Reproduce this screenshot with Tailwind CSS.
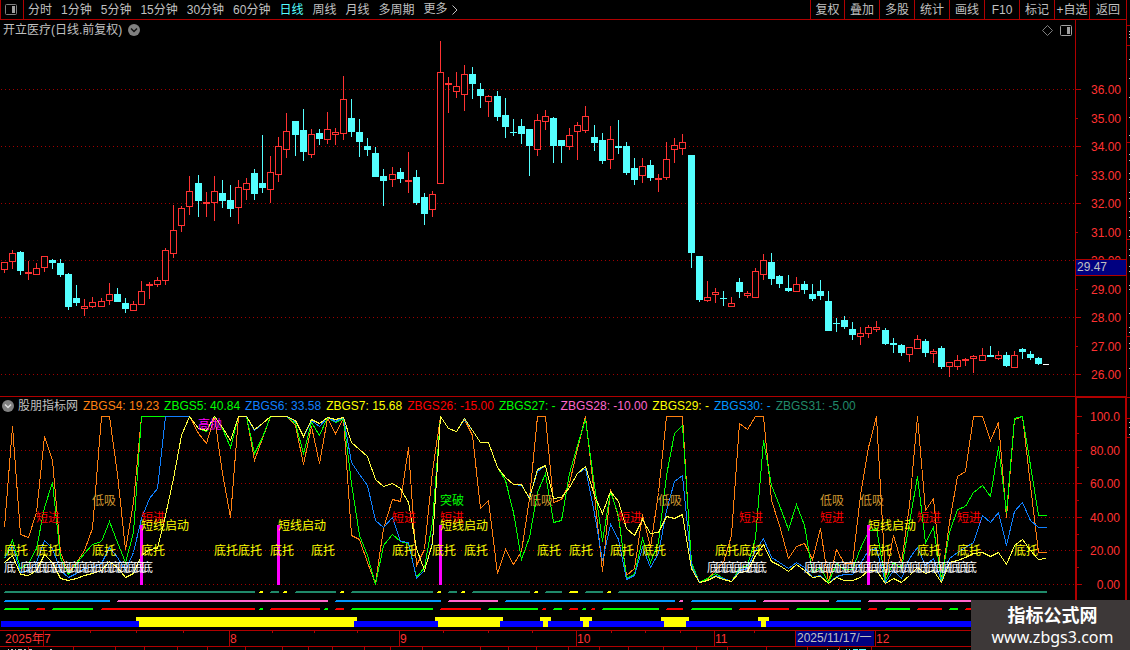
<!DOCTYPE html>
<html lang="zh-CN">
<head>
  <meta charset="UTF-8">
  <meta name="viewport" content="width=device-width, initial-scale=1.0">
  <title>开立医疗 日线</title>
  <script src="https://cdn.jsdelivr.net/npm/@tailwindcss/browser@4"></script>
</head>
<body class="flex h-screen overflow-hidden bg-black text-[#c0c0c0] text-xs font-['Liberation_Sans','Noto_Sans_CJK_SC',sans-serif]">

  <div class="flex min-w-0 flex-1 flex-col border-r border-[#b00000]">
    <!-- Toolbar -->
    <header class="flex h-5 shrink-0 justify-between border-b border-l border-[#b00000] leading-[21px] whitespace-nowrap">
      <nav class="flex" aria-label="周期">
        <button class="flex w-[23px] items-center border-r border-[#b00000] pl-1" aria-label="侧栏">
          <svg width="12" height="11" viewBox="0 0 12 11" fill="none">
            <rect x="0.5" y="0.5" width="11" height="10" rx="1" stroke="#808080"/>
            <rect x="7" y="2" width="3" height="7" fill="#a0a0a0"/>
          </svg>
        </button>
        <div class="flex h-[19px] gap-[9px] pl-1">
          <button>分时</button>
          <button>1分钟</button>
          <button>5分钟</button>
          <button>15分钟</button>
          <button>30分钟</button>
          <button>60分钟</button>
          <button class="text-[#54ffff]">日线</button>
          <button>周线</button>
          <button>月线</button>
          <button>多周期</button>
          <button class="flex items-center gap-1">更多
            <svg width="6" height="10" viewBox="0 0 6 10" fill="none" stroke="#c0c0c0"><path d="M0.5 0.5 L5 5 L0.5 9.5"/></svg>
          </button>
        </div>
      </nav>
      <div class="flex h-[19px]">
        <button class="w-[34px] border-l border-[#b00000]">复权</button>
        <button class="w-[35px] border-l border-[#b00000]">叠加</button>
        <button class="w-[35px] border-l border-[#b00000]">多股</button>
        <button class="w-[35px] border-l border-[#b00000]">统计</button>
        <button class="w-[35px] border-l border-[#b00000]">画线</button>
        <button class="w-[35px] border-l border-[#b00000]">F10</button>
        <button class="w-[35px] border-l border-[#b00000]">标记</button>
        <button class="w-[35px] border-l border-[#b00000]">+自选</button>
        <button class="w-[37px] border-l border-[#b00000]">返回</button>
      </div>
    </header>

    <main class="grid min-h-0 flex-1 grid-cols-[1fr_51px] grid-rows-[377fr_233fr]">
      <!-- Candles -->
      <section class="relative min-h-0 border-b border-[#b00000]">
        <svg id="price" class="absolute inset-0 size-full" viewBox="0 20 1075 376" preserveAspectRatio="none" shape-rendering="crispEdges"></svg>
        <div class="relative flex h-5 items-center justify-between pr-[3px] pl-[3px]">
          <div class="flex items-center gap-[6px]">
            <h1>开立医疗(日线.前复权)</h1>
            <button aria-label="展开">
              <svg class="block" width="12" height="12" viewBox="0 0 12 12"><circle cx="6" cy="6" r="6" fill="#808080"/><path d="M3 4.5 L6 7.5 L9 4.5" fill="none" stroke="#111" stroke-width="1.5"/></svg>
            </button>
          </div>
          <div class="flex items-center gap-[7px]">
            <svg width="11" height="11" viewBox="0 0 11 11" fill="none" stroke="#808080"><path d="M5.5 0.5 L10.5 5.5 L5.5 10.5 L0.5 5.5 Z"/></svg>
            <svg width="12" height="11" viewBox="0 0 12 11" fill="none"><rect x="0.5" y="0.5" width="11" height="10" rx="1" stroke="#a0a0a0"/><rect x="7" y="2" width="3" height="7" fill="#a0a0a0"/></svg>
          </div>
        </div>
      </section>
      <div id="priceAxis" class="relative min-h-0 border-b border-l border-[#b00000] text-[#ff3232]"></div>

      <!-- Indicator -->
      <section class="relative min-h-0">
        <svg id="indicator" class="absolute inset-0 size-full" viewBox="0 397 1075 233" preserveAspectRatio="none" shape-rendering="crispEdges"></svg>
        <div id="signals" class="absolute inset-0 overflow-hidden whitespace-nowrap"></div>
        <div class="relative flex h-[17px] items-center gap-[5px] overflow-hidden pl-[2px] whitespace-nowrap">
          <div class="flex items-center gap-1">
            <button aria-label="指标菜单">
              <svg class="block" width="12" height="12" viewBox="0 0 12 12"><circle cx="6" cy="6" r="6" fill="#808080"/><path d="M3 4.5 L6 7.5 L9 4.5" fill="none" stroke="#ddd" stroke-width="1.5"/></svg>
            </button>
            <h2>股朋指标网</h2>
          </div>
          <span class="text-[#ff8010]">ZBGS4: 19.23</span>
          <span class="text-[#00ff00]">ZBGS5: 40.84</span>
          <span class="text-[#1080ff]">ZBGS6: 33.58</span>
          <span class="text-[#ffff00]">ZBGS7: 15.68</span>
          <span class="text-[#ff0000]">ZBGS26: -15.00</span>
          <span class="text-[#00ff00]">ZBGS27: -</span>
          <span class="text-[#ff66cc]">ZBGS28: -10.00</span>
          <span class="text-[#ffff00]">ZBGS29: -</span>
          <span class="text-[#0096ff]">ZBGS30: -</span>
          <span class="text-[#208a6a]">ZBGS31: -5.00</span>
        </div>
      </section>
      <div id="indicatorAxis" class="relative min-h-0 border-t border-r border-l-2 border-[#b00000] text-[#ff3232]"></div>
    </main>

    <!-- Dates -->
    <footer class="relative h-5 shrink-0">
      <svg class="absolute inset-0 size-full" viewBox="0 630 1126 20" preserveAspectRatio="none" shape-rendering="crispEdges" id="dateTicks"></svg>
      <div id="dates" class="absolute inset-0 overflow-hidden leading-4 whitespace-nowrap text-[#ff3232]"></div>
    </footer>
  </div>

  <!-- Edge of the quote panel -->
  <svg id="edge" class="h-full w-[3px] shrink-0" viewBox="0 0 3 650" preserveAspectRatio="none" shape-rendering="crispEdges"></svg>

  <div class="fixed right-0 bottom-0 flex h-[50px] w-[159px] flex-col items-center justify-center bg-[#3d3838] pt-px pl-1 text-white">
    <strong class="text-lg leading-[22px] font-bold">指标公式网</strong>
    <a href="#" class="font-['Noto_Sans',sans-serif] text-base leading-5">www.zbgs3.com</a>
  </div>

  <script>
    const RED = '#ff3232', CYAN = '#54ffff', LINE = '#b00000'
    const barX = i => Math.floor(4.045 + i * 8.0825)
    const rect = (x, y, w, h, fill) => `<rect x="${x}" y="${y}" width="${w}" height="${h}" fill="${fill}"/>`
    const gridLine = y => `<path d="M1 ${y + 0.5} H1075" stroke="#a00000" stroke-dasharray="1 3"/>`

    // one bar per entry: colour high top bottom low
    const candles = `r262 262 270 273,r250 253 262 269,c251 252 271 275,r261 272 274 280,r263 268 275 275,r256 256 268 272,c259 260 263 269,c259 263 275 277,c273 274 307 310,c285 298 303 306,r299 306 309 316,r297 302 307 308,
r298 301 307 307,r283 294 301 305,c288 294 302 302,c298 303 309 313,r301 304 311 311,r281 291 305 305,r282 284 286 299,r277 280 285 287,r248 250 281 285,r205 230 254 258,r206 208 226 232,r176 191 207 215,
c175 183 201 217,r192 202 204 217,r176 191 203 221,c180 193 201 208,c185 200 209 217,r180 187 208 224,r178 183 190 200,c169 173 194 200,c135 183 188 193,r156 172 190 203,r137 146 175 182,r113 131 150 158,
c121 121 135 156,c109 130 152 161,r129 134 155 158,c129 133 139 145,r112 129 140 144,r128 132 135 145,r76 99 134 140,c99 118 132 137,c119 132 142 157,c138 146 150 156,c147 153 177 177,c169 176 181 206,
r167 174 180 187,c168 172 179 183,r152 180 182 193,c170 177 203 205,c193 197 214 225,r191 194 210 217,r41 72 184 184,r77 83 85 113,r72 86 92 98,r65 74 95 111,c67 74 84 99,c83 89 96 108,
r95 96 102 117,c91 96 117 121,c98 115 127 138,c119 132 133 136,c119 126 134 144,c129 129 146 176,r114 120 150 156,r110 116 122 130,c117 118 146 163,c140 140 146 163,r128 135 147 150,r122 125 132 160,
r106 116 131 133,c125 137 143 151,c133 140 161 164,r126 139 160 169,c120 146 148 154,c142 146 173 175,c158 168 180 185,r158 166 176 183,c160 165 178 181,r174 178 180 192,r142 159 178 180,r138 145 150 163,
r134 142 149 155,c155 155 253 268,c256 256 300 302,r281 297 301 302,r288 292 295 303,c291 298 299 306,r297 303 307 307,c278 282 292 298,r291 293 296 298,r268 271 298 298,r254 260 275 280,c253 262 279 285,
c275 276 284 288,c275 288 291 292,r277 284 292 292,c281 284 290 294,c284 294 299 301,c280 291 296 300,c291 301 331 331,c318 323 324 332,c316 320 327 329,c322 329 335 340,r327 333 337 345,r325 327 334 338,
r321 327 330 332,c328 330 344 345,c338 343 345 353,c344 345 353 356,r347 347 355 362,r335 339 349 349,c339 341 353 357,r349 351 354 363,c346 348 367 369,r362 362 367 377,r355 360 367 370,r358 359 361 366,
r355 356 359 373,r348 355 361 361,c346 355 357 357,r351 355 359 360,c352 355 366 367,r351 355 368 368,c348 349 352 359,c351 354 358 360,c357 358 364 365`.split(',').map(s => s.trim())

    let price = [89, 146, 203, 260, 317, 374].map(gridLine).join('')
    candles.forEach((c, i) => {
      const [high, top, bottom, low] = c.slice(1).split(' ').map(Number)
      const x = barX(i)
      if (c[0] === 'c') {
        price += rect(x, high, 1, low - high, CYAN) + rect(x - 3, top, 7, bottom - top, CYAN)
      } else {
        price += rect(x, high, 1, top - high, RED) + rect(x, bottom, 1, low - bottom, RED)
        price += rect(x - 3, top, 7, bottom - top, RED)
        if (bottom - top > 2) price += rect(x - 2, top + 1, 5, bottom - top - 2, '#000')
      }
    })
    price += rect(1043, 364, 6, 1, '#fff')
    document.getElementById('price').innerHTML = price

    const lines = [
      ['#ff8010', '527 426 534 537 512 436 460 552 572 562 550 528 416 416 474 549 502 416 416 416 416 416 416 416 433 443 416 473 517 416 416 460 438 416 416 416 425 464 426 463 418 433 418 535 539 562 583 528 499 501 447 565 549 471 416 428 431 419 435 508 500 573 549 564 551 498 416 416 502 499 483 448 416 495 571 489 517 575 568 514 547 492 416 416 416 567 582 579 570 562 535 423 429 416 416 500 525 558 546 543 559 528 582 549 563 563 495 447 416 577 535 562 505 416 510 498 580 522 476 471 416 416 440 422 517 419 416 485 552 552'],
      ['#00ff00', '558 540 568 563 548 507 482 557 574 563 553 544 541 521 542 562 532 416 416 416 416 416 416 416 428 431 416 428 447 416 416 453 437 416 416 416 423 453 422 435 417 422 418 483 535 555 584 545 534 541 543 577 567 522 416 428 431 419 430 442 442 467 480 512 559 537 492 473 522 520 473 445 419 485 541 491 515 578 574 538 562 542 475 433 425 562 582 578 573 578 581 568 565 538 440 485 505 529 504 525 572 567 582 563 569 569 548 531 528 580 562 568 522 476 542 527 580 532 509 506 492 485 496 446 512 418 416 465 515 515'],
      ['#1080ff', '558 545 572 570 562 540 548 570 577 573 568 567 563 547 557 570 552 518 498 488 416 416 416 416 428 430 416 427 440 416 416 430 423 416 416 416 421 436 420 426 417 421 417 462 474 485 520 527 517 541 542 578 570 542 416 428 431 419 430 442 442 467 477 484 485 497 471 465 498 497 487 473 468 513 560 524 539 579 575 547 567 553 510 481 475 565 582 580 575 578 581 570 568 550 538 557 562 568 562 567 577 575 583 576 574 574 563 550 548 582 570 578 558 547 565 558 581 558 552 547 542 515 522 512 545 511 502 520 527 527'],
      ['#ffff40', '562 555 574 575 570 554 562 578 580 578 575 573 570 561 567 577 573 555 549 548 515 478 435 416 428 430 416 427 440 416 416 429 423 416 416 416 420 436 419 423 417 419 417 442 449 456 479 486 483 488 502 548 570 543 416 428 431 418 430 442 442 467 477 484 484 498 469 465 498 497 487 473 466 495 513 491 501 528 535 519 533 532 516 518 514 568 582 580 576 579 581 572 571 555 544 561 565 571 564 570 577 576 583 577 580 580 577 570 570 583 578 582 575 567 573 570 582 562 560 557 553 552 556 552 564 545 539 550 559 558']
    ]

    let ind = [450, 483, 517, 550, 584].map(gridLine).join('')
    lines.forEach(([color, ys]) => {
      const points = ys.split(' ').map((y, i) => `${barX(i) + 0.5},${+y + 0.5}`).join(' ')
      ind += `<polyline points="${points}" fill="none" stroke="${color}"/>`
    })
    ;[140, 277, 439, 867].forEach(x => { ind += rect(x, 525, 3, 60, '#f0f') })

    // state rows: start end colour
    const rows = [
      [591, 't4 255,y259 263,t270 279,y283 287,t295 336,y340 344,t351 433,y437 441,t448 457,y461 465,t472 530,y534 538,t545 562,y569 578,t585 603,y607 611,t618 1047'],
      [600, 'b4 110,p117 328,b335 441,p448 498,b505 675,p679 683,b691 756,p763 829,b836 861,p868 1047'],
      [608, 'g4 29,r36 45,g52 93,r101 255,g259 263,r270 320,g324 328,r335 344,g351 433,r440 481,g488 538,r542 546,g553 562,r569 578,g582 586,r591 595,g602 659,r666 683,g691 732,r739 789,g796 861,r868 877,g885 910,r917 942,g949 958,r965 1047']
    ]
    const rowColors = { t: '#208a6a', y: '#ffff00', b: '#0096ff', p: '#ff66cc', g: '#00ff00', r: '#ff0000' }
    rows.forEach(([y, segs]) => segs.split(',').forEach(s => {
      const [a, b] = s.slice(1).split(' ').map(Number)
      ind += rect(a + 1, y, b - a - 1, 1, rowColors[s[0]]) + rect(a, y + 1, b - a, 1, rowColors[s[0]])
    }))
    ind += rect(1, 621, 1046, 6, '#00f')
    ;[[139, 354], [438, 500], [543, 548], [583, 589], [664, 686], [761, 766]].forEach(([a, b]) => {
      ind += rect(a - 3, 617, b - a + 6, 4, '#ff0') + rect(a, 621, b - a, 6, '#ff0')
    })
    document.getElementById('indicator').innerHTML = ind

    const range = (a, b) => Array.from({ length: b - a + 1 }, (_, k) => a + k)
    const signals = [
      ['高抛', 424, 'text-[#ff00ff]', [24]],
      ['低吸', 500, 'text-[#d09830]', [11, 65, 81, 101, 106]],
      ['突破', 500, 'text-[#00ff00]', [54]],
      ['短进', 517, 'text-[#ff0000]', [4, 17, 48, 54, 76, 91, 101, 113, 118]],
      ['短线启动', 525, 'text-[#ffff00]', [17, 34, 54, 107]],
      ['底托', 550, 'text-[#ffff00]', [0, 4, 11, 17, 26, 29, 33, 38, 48, 53, 57, 66, 70, 75, 79, 88, 91, 107, 113, 118, 125]],
      ['底', 567, 'text-white', [0, ...range(2, 17), ...range(87, 93), ...range(99, 119)]]
    ]
    document.getElementById('signals').innerHTML = signals.map(([text, y, cls, at]) => at.map(i =>
      `<span class="absolute -mt-[7px] h-4 leading-4 ${cls}" style="left:${barX(i) / 10.75}%;top:${(y - 397) / 2.33}%">${text}</span>`
    ).join('')).join('')

    // axis labels, each with its tick on the line
    function axis(id, base, height, labels, minor) {
      const at = y => `style="top:${(y - base) / height * 100}%"`
      document.getElementById(id).innerHTML = labels.map(([text, y, short]) =>
        `<div class="absolute inset-x-0 -mt-[7px] flex h-[15px] items-center justify-between pr-[5px] leading-[15px]" ${at(y)}><span class="h-px bg-[#b00000] ${short ? 'w-[2px]' : 'w-[5px]'}"></span><span class="pt-[2px]">${text}</span></div>`
      ).join('') + minor.map(y => `<div class="absolute left-0 h-px w-[2px] bg-[#b00000]" ${at(y)}></div>`).join('')
    }
    axis('priceAxis', 20, 376, [
      ['36.00', 89], ['35.00', 118, 1], ['34.00', 146], ['33.00', 175, 1], ['32.00', 203], ['31.00', 232, 1],
      ['30.00', 260], ['29.00', 289, 1], ['28.00', 317], ['27.00', 346, 1], ['26.00', 374]
    ], [])
    document.getElementById('priceAxis').innerHTML +=
      `<div class="absolute inset-x-0 h-[17px] border-y border-[#b00000] bg-[#000080] pl-px leading-[15px] text-[#c0c0c0]" style="top:${(259 - 20) / 3.76}%">29.47</div>`
    axis('indicatorAxis', 398, 232, [
      ['100.0', 416], ['80.00', 450], ['60.00', 483], ['40.00', 517], ['20.00', 550], ['0.00', 584]
    ], [433, 467, 500, 534, 567])

    const months = [[5, '2025年'], [44, '7'], [230, '8'], [400, '9'], [577, '10'], [715, '11'], [876, '12']]
    document.getElementById('dates').innerHTML = months.map(([x, text]) =>
      `<span class="absolute top-px" style="left:${x / 11.26}%">${text}</span>`
    ).join('') + `<span class="absolute top-px h-[15px] w-[78px] overflow-hidden bg-[#000080] pl-px leading-[15px] text-[#c0c0c0]" style="left:${796 / 11.26}%">2025/11/17/一</span>`
    let ticks = rect(0, 630, 1126, 1, LINE) + rect(0, 646, 1126, 1, LINE)
    ;[43, 229, 399, 576, 714, 795, 875].forEach(x => { ticks += rect(x, 631, 1, 15, LINE) })
    ;[90, 136, 183, 272, 314, 357, 443, 488, 532, 611, 645, 680, 754].forEach(x => { ticks += rect(x, 631, 1, 2, LINE) })
    ;[28, 73, 115, 144, 177, 207, 245, 282, 308, 332, 364, 390, 422, 480, 508, 536, 568, 599, 628, 663, 696, 727, 766, 807, 839, 871].forEach(x => { ticks += rect(x, 647, 1, 3, LINE) })
    ;[[8, 1], [11, 2], [15, 1], [18, 4], [24, 2], [29, 3], [50, 2], [827, 1], [838, 1]].forEach(([x, w]) => { ticks += rect(x, 649, w, 1, '#c0c0c0') })
    ;[[846, 1], [849, 1], [853, 5], [859, 7]].forEach(([x, w]) => { ticks += rect(x, 649, w, 1, CYAN) })
    document.getElementById('dateTicks').innerHTML = ticks

    let edge = [25, 45, 142, 239, 336, 397, 418, 437].map(y => rect(0, y, 3, 1, LINE)).join('')
    ;[31, 34, 37, 59, 78, 97, 117, 135, 154, 160, 173, 179, 192, 198, 211, 217, 230, 236, 249, 255, 266, 271, 285, 289, 313, 327, 332, 343, 348, 368, 422, 427, 434].forEach(y => { edge += rect(2, y, 1, 1, '#c0c0c0') })
    document.getElementById('edge').innerHTML = edge
  </script>
</body>
</html>
